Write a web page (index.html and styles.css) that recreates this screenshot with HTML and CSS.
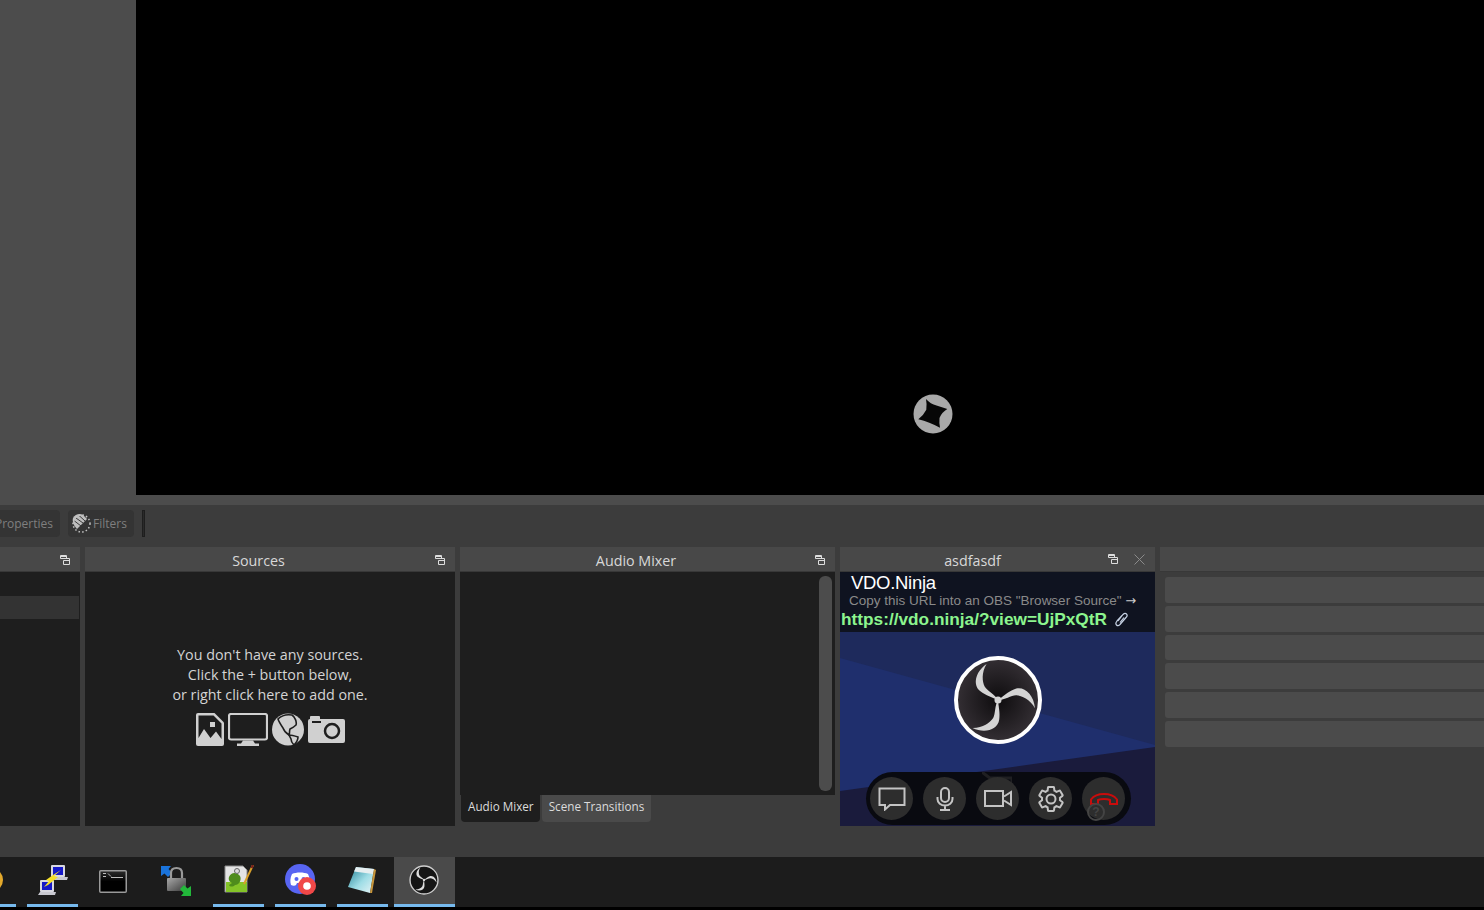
FILE: index.html
```html
<!DOCTYPE html>
<html lang="en">
<head>
    <meta charset="UTF-8">
    <title>OBS Studio</title>
    <link rel="stylesheet" href="styles.css">
</head>
<body>
    <svg class="defs" width="0" height="0">
        <symbol id="obs-blades" viewBox="-50 -50 100 100">
            <path d="M-13 -41C-26 -32 -29 -17 -20 -10C-14 -5 -6 -3 0 0C-4 -7 -12 -10 -15 -15C-18 -21 -19 -31 -13 -41Z"/>
            <path transform="rotate(120)" d="M-13 -41C-26 -32 -29 -17 -20 -10C-14 -5 -6 -3 0 0C-4 -7 -12 -10 -15 -15C-18 -21 -19 -31 -13 -41Z"/>
            <path transform="rotate(240)" d="M-13 -41C-26 -32 -29 -17 -20 -10C-14 -5 -6 -3 0 0C-4 -7 -12 -10 -15 -15C-18 -21 -19 -31 -13 -41Z"/>
            <circle r="4"/>
        </symbol>
        <symbol id="float" viewBox="0 0 10 10">
            <path d="M.5 .5H6.500V3.500H.5Z M.5 1.500H6.500" fill="none" stroke="#ddd"/>
            <path d="M3.500 3.500H9.500V9.500H3.500V5.500H9.500" fill="none" stroke="#ddd"/>
        </symbol>
        <linearGradient id="lock-body" x1="0" y1="0" x2="1" y2="1">
            <stop offset="0" stop-color="#a8a8a8"/>
            <stop offset="1" stop-color="#3c3c3c"/>
        </linearGradient>
        <linearGradient id="pad-page" x1="0" y1="0" x2="1" y2="1">
            <stop offset="0" stop-color="#1f7f94"/>
            <stop offset=".55" stop-color="#9fdde6"/>
            <stop offset="1" stop-color="#e8f4f6"/>
        </linearGradient>
        <linearGradient id="term-fill" x1="0" y1="0" x2="0" y2="1">
            <stop offset="0" stop-color="#2c2c2c"/>
            <stop offset=".5" stop-color="#000"/>
        </linearGradient>
    </svg>

    <div class="preview-row">
        <div class="side"></div>
        <div class="preview">
            <svg class="spinner" viewBox="0 0 40 40">
                <circle cx="20" cy="20" r="19.500" fill="#a9a9a9"/>
                <path d="M13 5Q17.500 10 23.500 11.500Q29 13 34.300 15Q28.500 18.500 26.500 24Q26 29 27 33.700Q21 30.500 16.300 28.700Q11 26.500 5.300 25.300Q10.500 21.500 13.300 15.800Q14 10 13 5Z" fill="#070707"/>
            </svg>
        </div>
    </div>
    <div class="strip"></div>

    <div class="toolbar">
        <button class="tool-btn props">Properties</button>
        <button class="tool-btn filters">
            <svg width="21" height="21" viewBox="0 0 21 21">
                <path d="M2 5C4 1 9 0 12 2L16 6L10 12L6 16C3 13 1 9 2 5Z" fill="#bdbdbd"/>
                <path d="M5 5L12 10M3.500 8L10 13M8 2.500L14 8" stroke="#3a3a3a" fill="none"/>
                <circle cx="10.500" cy="10.500" r="8.500" fill="none" stroke="#c4c4c4" stroke-width="1.500" stroke-dasharray="1.500 2.200"/>
            </svg>
            Filters
        </button>
        <span class="tool-sep"></span>
    </div>

    <div class="docks">
        <section class="dock dock-scenes">
            <header class="dock-head">
                <svg class="float-icon"><use href="#float"/></svg>
            </header>
            <div class="dock-body">
                <div class="scene-row"></div>
            </div>
        </section>

        <section class="dock dock-sources">
            <header class="dock-head">
                <span class="dock-title">Sources</span>
                <svg class="float-icon"><use href="#float"/></svg>
            </header>
            <div class="dock-body empty-sources">
                <p>You don't have any sources.<br>Click the + button below,<br>or right click here to add one.</p>
                <div class="source-icons">
                    <svg width="28" height="33" viewBox="0 0 28 33">
                        <path d="M2 0H18.500L28 9.500V31Q28 33 26 33H2Q0 33 0 31V2Q0 0 2 0Z" fill="#d0d0d0"/>
                        <path d="M2.500 2.500H17.500L25.500 10.500V26L20 18.500L14.500 25L8 16L2.500 25Z" fill="#1e1e1e"/>
                        <rect x="14" y="9" width="5" height="5" fill="#d0d0d0"/>
                    </svg>
                    <svg width="40" height="33" viewBox="0 0 40 33">
                        <rect x="1" y="1" width="38" height="25.500" rx="2" fill="none" stroke="#d0d0d0" stroke-width="2.200"/>
                        <path d="M15 27.500H25L27 30.500H31V33H9V30.500H13Z" fill="#d0d0d0"/>
                    </svg>
                    <svg width="32" height="33" viewBox="0 0 32 33">
                        <circle cx="16" cy="16.500" r="16" fill="#d0d0d0"/>
                        <path d="M6 6C9 3 14 1 20 2C23 4 25 9 24 12C22 14 20 15 18 16C17 19 18 21 17 22C14 20 12 18 11 15C9 12 7 9 6 6Z" fill="#d0d0d0" stroke="#1e1e1e" stroke-width="1.600"/>
                        <path d="M17 22C20 22 23 23 26 24C26 27 24 30 22 32C20 30 19 27 19 26Z" fill="#d0d0d0" stroke="#1e1e1e" stroke-width="1.600"/>
                    </svg>
                    <svg width="37" height="27" viewBox="0 0 37 27">
                        <path d="M2 3V1Q2 0 3 0H11Q12 0 12 1V3H35Q37 3 37 5V25Q37 27 35 27H2Q0 27 0 25V5Q0 3 2 3Z" fill="#d0d0d0"/>
                        <rect x="4" y="5" width="9" height="2" fill="#1e1e1e"/>
                        <circle cx="24" cy="15" r="7" fill="none" stroke="#1e1e1e" stroke-width="2.500"/>
                    </svg>
                </div>
            </div>
        </section>

        <section class="dock dock-mixer">
            <header class="dock-head">
                <span class="dock-title">Audio Mixer</span>
                <svg class="float-icon"><use href="#float"/></svg>
            </header>
            <div class="dock-body mixer-body">
                <div class="scrollbar"></div>
            </div>
            <div class="tabs">
                <span class="tab tab-active">Audio Mixer</span>
                <span class="tab">Scene Transitions</span>
            </div>
        </section>

        <section class="dock dock-vdo">
            <header class="dock-head">
                <span class="dock-title">asdfasdf</span>
                <svg class="float-icon"><use href="#float"/></svg>
                <svg class="close-icon" viewBox="0 0 11 11"><path d="M.5 .5L10.500 10.500M10.500 .5L.5 10.500" stroke="#8a8a8a" fill="none"/></svg>
            </header>
            <div class="vdo-body">
                <div class="vdo-top">
                    <div class="vdo-name">VDO.Ninja</div>
                    <div class="vdo-hint">Copy this URL into an OBS "Browser Source" <span class="arrow">&#8594;</span></div>
                    <div class="vdo-url">
                        https://vdo.ninja/?view=UjPxQtR
                        <svg width="13" height="15" viewBox="0 0 13 15"><path d="M3 9L8 2.500Q10 .5 11.500 2T11 5.500L5 12.500Q3 14.500 1.500 13T2 9L7 3.500M5 10.500L9 5.500" fill="none" stroke="#c6d2e4" stroke-width="1.200"/></svg>
                    </div>
                </div>
                <div class="vdo-stage">
                    <svg class="vdo-bg" viewBox="0 0 315 194" preserveAspectRatio="none">
                        <rect width="315" height="194" fill="#1e2a5c"/>
                        <path d="M0 26L315 113V194H0Z" fill="#1f2f6d"/>
                        <path d="M0 159L315 115V194H0Z" fill="#1a1b3c"/>
                    </svg>
                    <svg class="vdo-logo" viewBox="0 0 88 88">
                        <defs>
                            <radialGradient id="logo-fill">
                                <stop offset="0" stop-color="#0e0c0e"/>
                                <stop offset="1" stop-color="#342f34"/>
                            </radialGradient>
                        </defs>
                        <circle cx="44" cy="44" r="42" fill="url(#logo-fill)" stroke="#fff" stroke-width="4"/>
                        <use href="#obs-blades" x="0" y="0" width="88" height="88" fill="#d4d4d4"/>
                    </svg>
                    <div class="call-bar">
                        <svg class="ghost" viewBox="0 0 30 26"><path d="M0 0L26 20M8 6H30V26" fill="none" stroke="#1f1f22" stroke-width="3"/></svg>
                        <button class="call-btn">
                            <svg width="28" height="24" viewBox="0 0 28 24"><path d="M1.500 1.500H26.500V18H12L7 22.500V18H1.500Z" fill="none" stroke="#c4c4c4" stroke-width="2"/></svg>
                        </button>
                        <button class="call-btn">
                            <svg width="18" height="24" viewBox="0 0 18 24"><rect x="5" y="1" width="8" height="14" rx="4" fill="none" stroke="#c4c4c4" stroke-width="2"/><path d="M1.500 10V12C1.500 16 5 18.500 9 18.500S16.500 16 16.500 12V10M9 18.500V23M4 23H14" fill="none" stroke="#c4c4c4" stroke-width="2"/></svg>
                        </button>
                        <button class="call-btn">
                            <svg width="28" height="17" viewBox="0 0 28 17"><rect x="1" y="1" width="18" height="15" fill="none" stroke="#c4c4c4" stroke-width="2"/><path d="M20 6.500L27 2V15L20 10.500" fill="none" stroke="#c4c4c4" stroke-width="2"/></svg>
                        </button>
                        <button class="call-btn">
                            <svg width="30" height="30" viewBox="0 0 24 24"><path d="M19.140 12.940c.04-.3.06-.61.06-.94 0-.32-.02-.64-.07-.94l2.030-1.580c.18-.14.23-.41.12-.61l-1.920-3.320c-.12-.22-.37-.29-.59-.22l-2.390.96c-.5-.38-1.030-.7-1.620-.94l-.36-2.540c-.04-.24-.24-.41-.48-.41h-3.840c-.24 0-.43.17-.47.41l-.36 2.540c-.59.24-1.130.57-1.620.94l-2.390-.96c-.22-.08-.47 0-.59.22L2.740 8.870c-.12.21-.08.47.12.61l2.030 1.580c-.05.3-.09.63-.09.94s.02.64.07.94l-2.030 1.580c-.18.14-.23.41-.12.61l1.920 3.320c.12.22.37.29.59.22l2.390-.96c.5.38 1.030.7 1.620.94l.36 2.540c.05.24.24.41.48.41h3.840c.24 0 .44-.17.47-.41l.36-2.540c.59-.24 1.130-.56 1.620-.94l2.390.96c.22.08.47 0 .59-.22l1.920-3.320c.12-.22.07-.47-.12-.61l-2.010-1.580zM12 15.600c-1.980 0-3.600-1.620-3.600-3.600s1.620-3.600 3.600-3.600 3.600 1.620 3.600 3.600-1.620 3.600-3.600 3.600z" fill="none" stroke="#c4c4c4" stroke-width="1.600"/></svg>
                        </button>
                        <button class="call-btn">
                            <svg width="28" height="12" viewBox="0 0 28 12"><path d="M1 11V6.500C4 2.500 9 1 14 1S24 2.500 27 6.500V11H20V7C17 5.500 11 5.500 8 7V11Z" fill="none" stroke="#c90c0c" stroke-width="2"/></svg>
                        </button>
                        <span class="help-mark">?</span>
                    </div>
                </div>
            </div>
        </section>

        <section class="dock dock-controls">
            <header class="dock-head"></header>
            <div class="control-list">
                <div class="control-btn"></div>
                <div class="control-btn"></div>
                <div class="control-btn"></div>
                <div class="control-btn"></div>
                <div class="control-btn"></div>
                <div class="control-btn"></div>
            </div>
        </section>
    </div>

    <div class="taskbar">
        <div class="task task-first on">
            <svg width="16" height="30" viewBox="0 0 16 30"><circle cx="-9" cy="15" r="12" fill="#e3a92c"/></svg>
        </div>
        <div class="task on">
            <svg width="30" height="31" viewBox="0 0 30 31">
                <rect x="13" y="1" width="14" height="12" rx="1" fill="#d8d8e0"/>
                <rect x="15" y="3" width="10" height="8" fill="#1518c8"/>
                <path d="M17 13H30L29 16H16Z" fill="#c8c8d0"/>
                <rect x="2" y="16" width="14" height="12" rx="1" fill="#d8d8e0"/>
                <rect x="4" y="18" width="10" height="8" fill="#1518c8"/>
                <path d="M2 28H18L17 31H0Z" fill="#c8c8d0"/>
                <path d="M23 6L16 12L20 13L10 21L6 23L11 17L8 16L15 11Z" fill="#f5e02a"/>
            </svg>
        </div>
        <div class="task task-term">
            <svg width="28" height="23" viewBox="0 0 28 23">
                <rect x=".75" y=".75" width="26.500" height="21.500" rx="1" fill="url(#term-fill)" stroke="#9a9a9a" stroke-width="1.500"/>
                <path d="M4 3.500H7M4 6.500H7M9 3.500L12 6.500M12 7.500H24" stroke="#bbb" fill="none"/>
            </svg>
        </div>
        <div class="task task-lock">
            <svg width="30" height="30" viewBox="0 0 30 30">
                <path d="M0 0H10L7.500 3L11 7L7 11L3.500 7.500L0 10Z" fill="#1a74dc"/>
                <path d="M10 13V7Q10 2 15.500 2T21 7V13" fill="none" stroke="#9a9a9a" stroke-width="2.200"/>
                <rect x="6" y="12" width="19" height="13" rx="1" fill="url(#lock-body)"/>
                <path d="M30 30H20L22.500 27L19 23L23 19L26.500 22.500L30 20Z" fill="#22b83a"/>
            </svg>
        </div>
        <div class="task on">
            <svg width="30" height="29" viewBox="0 0 30 29">
                <path d="M1 1H19L23 5V27H1Z" fill="#e4e4e4" stroke="#8a8a8a"/>
                <rect x="2" y="17" width="21" height="10" fill="#84c428"/>
                <path d="M5 12C7 7 13 7 16 11C18 15 15 20 11 20C9 22 6 22 5 20L8 18C6 17 4 15 5 12Z" fill="#4e8c1c"/>
                <circle cx="13" cy="6" r="2.500" fill="#dcdcdc" stroke="#666"/>
                <path d="M29 0L20 19" stroke="#d8a02a" stroke-width="2"/>
                <path d="M29 0L27.500 3" stroke="#7a1c1c" stroke-width="2"/>
            </svg>
        </div>
        <div class="task on">
            <svg width="32" height="32" viewBox="0 0 32 32">
                <circle cx="15" cy="15" r="15" fill="#5865f2"/>
                <path d="M7 10C11 8 19 8 23 10C25 14 25 18 24 21C22 22 20 22 19 21L18 19H12L11 21C10 22 8 22 6 21C5 18 5 14 7 10Z" fill="#fff"/>
                <circle cx="11.500" cy="15" r="2" fill="#5865f2"/><circle cx="18.500" cy="15" r="2" fill="#5865f2"/>
                <circle cx="22" cy="22" r="9" fill="#f04848"/><circle cx="22" cy="22" r="3.800" fill="#fff"/>
            </svg>
        </div>
        <div class="task task-pad on">
            <svg width="28" height="28" viewBox="0 0 28 28">
                <path d="M8 1L26 3L22 27L0 21Z" fill="url(#pad-page)"/>
                <path d="M8 1L26 3L25 8L6 5.500Z" fill="#e6eef0"/>
                <path d="M26 3L28 4L24 27L22 27Z" fill="#c8963c"/>
            </svg>
        </div>
        <div class="task task-obs on">
            <svg width="30" height="30" viewBox="0 0 88 88">
                <circle cx="44" cy="44" r="41" fill="#151515" stroke="#cfcfcf" stroke-width="4"/>
                <use href="#obs-blades" x="0" y="0" width="88" height="88" fill="#dcdcdc"/>
            </svg>
        </div>
    </div>
</body>
</html>
```

FILE: styles.css
```css
* {
    box-sizing: border-box;
}

html, body {
    margin: 0;
    padding: 0;
    height: 100%;
    overflow: hidden;
}

body {
    display: flex;
    flex-direction: column;
    background-color: #3c3c3c;
    color: #dedede;
    font-family: "Open Sans", "Noto Sans", sans-serif;
    font-size: 14.300px;
}

.defs {
    position: absolute;
}

/* Preview */
.preview-row {
    display: flex;
    height: 495px;
}

.side {
    width: 136px;
    background-color: #4c4c4c;
}

.preview {
    position: relative;
    flex: 1;
    background-color: #000;
}

.spinner {
    position: absolute;
    left: 777px;
    top: 394px;
    width: 40px;
    height: 40px;
}

.strip {
    height: 10px;
    background-color: #4c4c4c;
}

/* Toolbar */
.toolbar {
    display: flex;
    align-items: center;
    gap: 8px;
    height: 32px;
    padding-top: 5px;
    margin-left: -16px;
}

.tool-btn {
    display: flex;
    align-items: center;
    height: 27px;
    padding: 0 7px 0 3px;
    border: none;
    border-radius: 4px;
    background-color: #343434;
    color: #7f7f7f;
    font-family: inherit;
    font-size: 12px;
}

.props {
    width: 76px;
    justify-content: flex-end;
}

.filters {
    width: 66px;
    gap: 1px;
}

.tool-sep {
    width: 3px;
    height: 27px;
    background-color: #2a2a2a;
    border: 1px solid #1e1e1e;
}

/* Docks */
.docks {
    display: flex;
    gap: 5px;
    height: 279px;
    margin-top: 10px;
}

.dock {
    display: flex;
    flex-direction: column;
}

.dock-scenes { width: 80px; }
.dock-sources { width: 370px; }
.dock-mixer { width: 375px; }
.dock-vdo { width: 315px; }
.dock-controls { flex: 1; }

.dock-head {
    position: relative;
    display: flex;
    align-items: center;
    justify-content: center;
    height: 25px;
    flex: none;
    background-color: #484848;
    border-bottom: 1px solid #383838;
}

.dock-title {
    margin-right: 23px;
    margin-top: 3px;
    color: #d8d8d8;
}

.dock-vdo .dock-title {
    margin-right: 50px;
}

.float-icon {
    position: absolute;
    right: 10px;
    top: 8px;
    width: 10px;
    height: 10px;
}

.close-icon {
    position: absolute;
    right: 10px;
    top: 7px;
    width: 11px;
    height: 11px;
}

.dock-vdo .float-icon {
    right: 37px;
    top: 7px;
}

.dock-body {
    flex: 1;
    background-color: #1e1e1e;
}

.scene-row {
    height: 23px;
    margin-top: 24px;
    margin-right: 1px;
    background-color: #333;
}

/* Sources */
.empty-sources {
    display: flex;
    flex-direction: column;
    align-items: center;
    padding-top: 73px;
}

.empty-sources p {
    margin: 0;
    text-align: center;
    line-height: 20px;
    color: #d4d4d4;
}

.source-icons {
    display: flex;
    align-items: center;
    gap: 4px;
    margin-top: 8px;
}

/* Mixer */
.mixer-body {
    position: relative;
}

.scrollbar {
    position: absolute;
    top: 4px;
    right: 3px;
    bottom: 4px;
    width: 13px;
    border-radius: 6px;
    background-color: #4c4c4c;
}

.tabs {
    display: flex;
    align-items: stretch;
    gap: 2px;
    height: 31px;
    padding: 0 0 4px 1px;
}

.tab {
    display: flex;
    align-items: center;
    padding: 0 7px 5px 7px;
    border-radius: 0 0 4px 4px;
    background-color: #4a4a4a;
    font-size: 11.700px;
    color: #dcdcdc;
}

.tab-active {
    padding-right: 6px;
    background-color: #1e1e1e;
}

/* VDO.Ninja dock */
.vdo-body {
    flex: 1;
    display: flex;
    flex-direction: column;
    font-family: "Liberation Sans", Arial, sans-serif;
}

.vdo-top {
    height: 60px;
    flex: none;
    background-color: #0f1320;
}

.vdo-name {
    padding-left: 11px;
    font-size: 18.500px;
    line-height: 22px;
    color: #fff;
    letter-spacing: -0.3px;
}

.vdo-hint {
    margin-top: -1px;
    padding-left: 9px;
    font-size: 13.500px;
    line-height: 16px;
    color: #8a8a8a;
    white-space: nowrap;
}

.arrow {
    font-family: "DejaVu Sans", sans-serif;
    font-size: 13px;
    color: #ccc;
}

.vdo-url {
    display: flex;
    align-items: center;
    gap: 8px;
    padding-left: 1px;
    font-size: 17.260px;
    line-height: 20px;
    font-weight: bold;
    color: #8cf58e;
    white-space: nowrap;
}

.vdo-stage {
    position: relative;
    flex: 1;
    overflow: hidden;
}

.vdo-bg {
    position: absolute;
    left: 0;
    top: 0;
    width: 100%;
    height: 100%;
}

.vdo-logo {
    position: absolute;
    left: 114px;
    top: 24px;
    width: 88px;
    height: 88px;
}

.call-bar {
    position: absolute;
    left: 26px;
    top: 140px;
    width: 265px;
    height: 53px;
    display: flex;
    align-items: center;
    gap: 10px;
    padding-left: 4px;
    border-radius: 27px;
    background-color: #090a10;
}

.ghost {
    position: absolute;
    left: 116px;
    top: 0;
    width: 30px;
    height: 26px;
}

.call-btn {
    position: relative;
    display: flex;
    align-items: center;
    justify-content: center;
    width: 43px;
    height: 43px;
    padding: 0;
    border: none;
    border-radius: 50%;
    background-color: #2d2d2d;
}

.help-mark {
    position: absolute;
    left: 221px;
    top: 31px;
    width: 18px;
    height: 18px;
    border: 2px solid #444;
    border-radius: 50%;
    color: #444;
    font-size: 12px;
    font-weight: bold;
    line-height: 14px;
    text-align: center;
}

/* Right dock */
.control-list {
    display: flex;
    flex-direction: column;
    gap: 3px;
    padding: 5px 0 0 5px;
    margin-right: -4px;
}

.control-btn {
    height: 26px;
    border-radius: 3px;
    background-color: #4b4b4b;
}

.control-btn:nth-child(3) {
    height: 25px;
}

/* Taskbar */
.taskbar {
    display: flex;
    gap: 11px;
    height: 53px;
    margin-top: 31px;
    padding-bottom: 3px;
    margin-left: -35px;
    background-color: #1c1c1c;
    box-shadow: inset 0 -3px 0 #000;
}

.task {
    display: flex;
    align-items: center;
    justify-content: center;
    width: 51px;
    height: 50px;
    padding-bottom: 2px;
}

.task.on {
    border-bottom: 3px solid #76b9ed;
}

.task-first {
    justify-content: flex-end;
}

.task-term {
    padding-right: 3px;
}

.task-lock {
    padding-right: 1px;
}

.task-pad {
    padding-right: 2px;
}

.task-obs {
    width: 61px;
    margin-left: -5px;
    padding-right: 1px;
    background-color: #4a4a4a;
}
```
